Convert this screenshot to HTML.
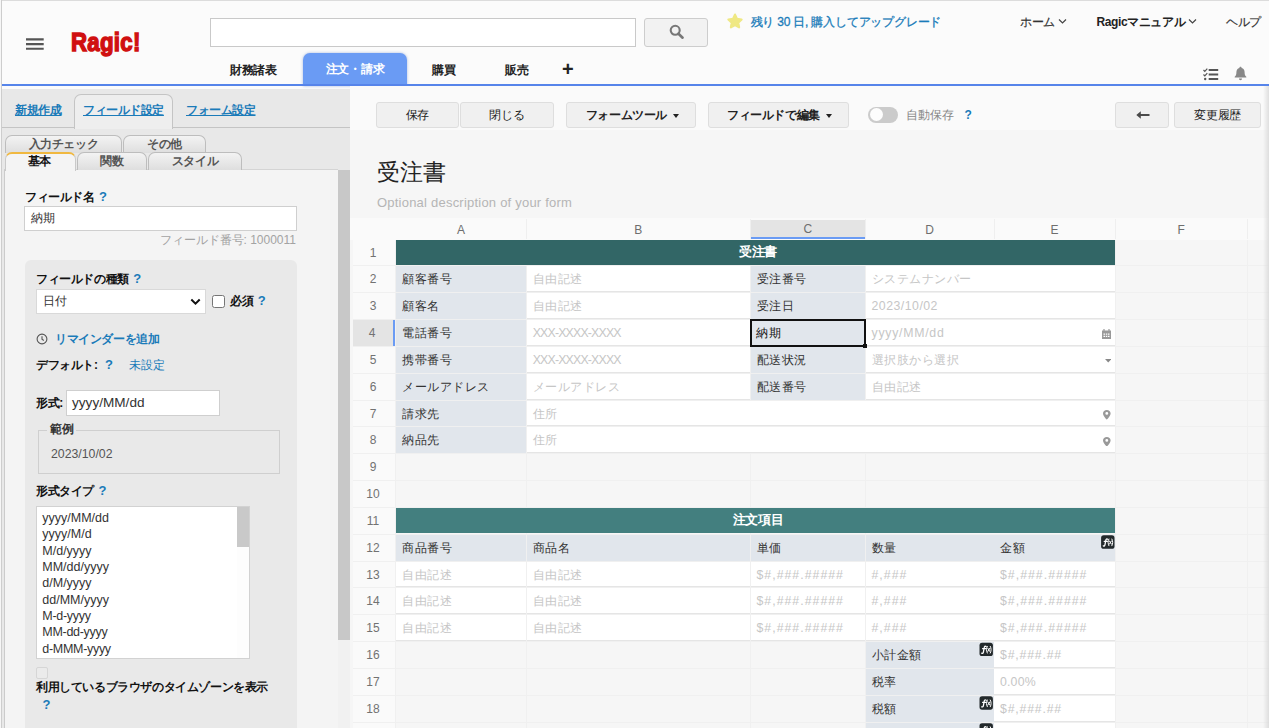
<!DOCTYPE html>
<html lang="ja">
<head>
<meta charset="utf-8">
<title>Ragic</title>
<style>
*{box-sizing:border-box;margin:0;padding:0}
html,body{width:1269px;height:728px;overflow:hidden;background:#f5f5f5;font-family:"Liberation Sans",sans-serif;font-size:13px;color:#222}
.a{position:absolute;white-space:nowrap}
.b{font-weight:bold}
.blue{color:#1a7bb9}
/* header */
#hdr{left:0;top:0;width:1269px;height:90px;background:#fbfbfb}
#hline{left:0;top:84px;width:1269px;height:2.300px;background:#5684ea}
#edgeL{left:0;top:0;width:2.400px;height:728px;background:linear-gradient(90deg,#f6f6f6 0,#f6f6f6 1.500px,#cdcdcd 1.500px,#cdcdcd 2.400px)}
#edgeT{left:0;top:0;width:1269px;height:1px;background:#dcdcdc}
.nav{font-size:12px;letter-spacing:-.3px;font-weight:bold;color:#222;top:62px;height:16px;line-height:16px}
#navact{left:303px;top:53px;width:104px;height:33px;background:#6a9bf4;border-radius:7px 7px 0 0;color:#fff;text-align:center;line-height:32px;font-size:12px;letter-spacing:-.3px;font-weight:bold;box-shadow:0 0 3px rgba(80,120,200,.5)}
#search{left:210px;top:18px;width:426px;height:29px;background:#fff;border:1px solid #c9c9c9}
#sbtn{left:644px;top:18px;width:64px;height:29px;background:#f2f2f2;border:1px solid #cdcdcd;border-radius:3px}
.top{font-size:12px;letter-spacing:-.4px;-webkit-text-stroke:.2px;top:14px;height:16px;line-height:16px;color:#333}
/* left panel */
#lp{left:0;top:88.500px;width:350px;height:640px;background:#e8e8e8}
#lpin{left:4px;top:169px;width:334px;height:559px;background:#f4f4f4;border-left:1px solid #cbcbcb;border-top:1px solid #d4d4d4}
#lsbt{left:338px;top:170px;width:12px;height:558px;background:#f1f1f1}
#lsbh{left:338.200px;top:170px;width:11.600px;height:470px;background:#c8c8c8}
#tabline{left:0;top:127px;width:350px;height:1px;background:#c4c4c4}
#tabact{left:74px;top:94px;width:99px;height:35px;background:#eeeeee;border:1px solid #c4c4c4;border-bottom:none;border-radius:7px 7px 0 0}
.lnk{font-size:12px;letter-spacing:-.45px;font-weight:bold;color:#1a7bb9;text-decoration:underline;top:102px;height:16px;line-height:16px}
.st{height:18px;border:1px solid #bdbdbd;border-bottom:none;border-radius:7px 7px 0 0;background:linear-gradient(#f3f3f3,#dedede);font-size:12px;letter-spacing:-.45px;font-weight:bold;color:#555;text-align:center;line-height:16px}
.lab{font-size:12px;letter-spacing:-.4px;font-weight:bold;color:#111;height:16px;line-height:16px}
.q{color:#1a7bb9;font-weight:bold;font-size:13px;margin-left:1.500px}
.inp{background:#fff;border:1px solid #cfcfcf;font-size:12px;color:#333;line-height:22px;padding-left:5px}
#gbox{left:25px;top:260.300px;width:271.800px;height:480px;background:#e9e9e9;border-radius:6px}
.li{left:5.300px;font-size:12.500px;color:#333;height:16px;line-height:16px}
</style>
</head>
<body>
<!-- ===== header ===== -->
<div id="hdr" class="a"></div>
<div id="edgeT" class="a"></div>
<svg class="a" style="left:26px;top:38px" width="18" height="13" viewBox="0 0 18 13"><path d="M0 1.400h17.700M0 6.100h17.700M0 10.800h17.700" stroke="#555" stroke-width="2.100" fill="none"/></svg>
<div class="a" id="logo" style="left:70.500px;top:24.300px;font-size:26.500px;line-height:36px;font-weight:bold;color:#d01010;-webkit-text-stroke:1.500px #d01010;transform-origin:0 50%;transform:scaleX(.84);letter-spacing:.3px">Ragic!</div>
<div id="search" class="a"></div>
<div id="sbtn" class="a"></div>
<svg class="a" style="left:668px;top:23px" width="17" height="17" viewBox="0 0 17 17"><circle cx="7.200" cy="7.300" r="4.500" stroke="#777" stroke-width="2.100" fill="none"/><path d="M10.500 10.700L14.600 14.700" stroke="#777" stroke-width="2.600" stroke-linecap="round"/></svg>
<div class="a nav" style="left:230px">財務諸表</div>
<div id="navact" class="a">注文・請求</div>
<div class="a nav" style="left:432px">購買</div>
<div class="a nav" style="left:505px">販売</div>
<div class="a" style="left:562px;top:58px;font-size:20px;line-height:22px;font-weight:bold;color:#222">+</div>
<svg class="a" style="left:726px;top:12px" width="18" height="18" viewBox="0 0 18 18"><path d="M9 2.600l2 4.300 4.600.6-3.400 3.200.9 4.600L9 13l-4.100 2.300.9-4.600-3.400-3.200 4.600-.6z" fill="#efe883" stroke="#efe883" stroke-width="2.200" stroke-linejoin="round"/></svg>
<div class="a top" style="left:750.500px;color:#1a7bb9;letter-spacing:-.2px;-webkit-text-stroke:.3px #1a7bb9">残り 30 日, 購入してアップグレード</div>
<div class="a top" style="left:1020px">ホーム</div>
<svg class="a" style="left:1058px;top:18px" width="9" height="7" viewBox="0 0 9 7"><path d="M1 1.5l3.5 3.5L8 1.5" stroke="#444" stroke-width="1.2" fill="none"/></svg>
<div class="a top b" style="left:1096.500px;color:#222;letter-spacing:-.4px;-webkit-text-stroke:0">Ragicマニュアル</div>
<svg class="a" style="left:1188px;top:18px" width="9" height="7" viewBox="0 0 9 7"><path d="M1 1.5l3.5 3.5L8 1.5" stroke="#444" stroke-width="1.2" fill="none"/></svg>
<div class="a top" style="left:1226px">ヘルプ</div>
<!-- checklist + bell -->
<svg class="a" style="left:1202.500px;top:67.700px" width="16" height="13" viewBox="0 0 16 13"><path d="M5.700 2h9.500M5.700 6.500h9.500M5.700 11h9.500" stroke="#555" stroke-width="1.800"/><path d="M.5 2l1.300 1.300L4.300.6M.5 6.500l1.300 1.300 2.500-2.700" stroke="#555" stroke-width="1.200" fill="none"/><circle cx="2.200" cy="11" r="1.200" fill="#555"/></svg>
<svg class="a" style="left:1234px;top:66px" width="13" height="15" viewBox="0 0 13 15"><path d="M6.5 0.8c.7 0 1.1.5 1.1 1.1 2 .5 3 2.2 3 4.3 0 2.600.7 3.700 1.700 4.600v.8H.7v-.8c1-.9 1.700-2 1.700-4.600 0-2.100 1-3.800 3-4.300 0-.6.400-1.100 1.100-1.100zM5 12.600h3c0 .9-.6 1.600-1.500 1.600S5 13.500 5 12.600z" fill="#888"/></svg>
<div id="hline" class="a"></div>

<!-- ===== left panel ===== -->
<div id="lp" class="a"></div>
<div id="tabline" class="a"></div>
<div id="tabact" class="a"></div>
<div class="a lnk" style="left:15px">新規作成</div>
<div class="a lnk" style="left:83px">フィールド設定</div>
<div class="a lnk" style="left:186px">フォーム設定</div>
<div id="lpin" class="a"></div>
<div id="lsbt" class="a"></div>
<div id="lsbh" class="a"></div>
<div class="a st" style="left:5px;top:135px;width:117px">入力チェック</div>
<div class="a st" style="left:123px;top:135px;width:83px">その他</div>
<div class="a st" style="left:77px;top:152px;width:70px">関数</div>
<div class="a st" style="left:148px;top:152px;width:94px">スタイル</div>
<div class="a st" style="left:5px;top:152px;width:71px;height:19px;background:#f4f4f4;color:#111;border-top:2px solid #f0b840;border-color:#f0b840 #c9c9c9 #c9c9c9 #c9c9c9;line-height:15px;padding-right:2px">基本</div>

<div class="a lab" style="left:25px;top:189px">フィールド名 <span class="q">?</span></div>
<div class="a inp" style="left:24px;top:206px;width:273px;height:25px;letter-spacing:.3px;padding-left:5.500px">納期</div>
<div class="a" style="left:100px;width:196px;top:232px;text-align:right;font-size:12px;color:#a3a3a3;line-height:16px">フィールド番号: 1000011</div>
<div id="gbox" class="a"></div>
<div class="a lab" style="left:36px;top:271px">フィールドの種類 <span class="q">?</span></div>
<div class="a inp" style="left:36px;top:289px;width:170px;height:25px;border-color:#d9d9d9;padding-left:6px">日付</div>
<svg class="a" style="left:190px;top:298px" width="11" height="8" viewBox="0 0 11 8"><path d="M1.300 1.500l4.200 4.200 4.200-4.200" stroke="#111" stroke-width="2" fill="none"/></svg>
<div class="a" style="left:212px;top:294.700px;width:13px;height:13px;background:#fff;border:1px solid #767676;border-radius:2.500px"></div>
<div class="a lab" style="left:230px;top:293px">必須 <span class="q">?</span></div>
<svg class="a" style="left:36px;top:333px" width="12" height="12" viewBox="0 0 12 12"><circle cx="6" cy="6" r="4.900" stroke="#555" stroke-width="1.100" fill="none"/><path d="M6 3.200V6.300l1.800 1.200" stroke="#555" stroke-width="1.100" fill="none"/></svg>
<div class="a lab" style="left:55px;top:331px;color:#1a7bb9">リマインダーを追加</div>
<div class="a lab" style="left:36px;top:357px">デフォルト: &nbsp;<span class="q">?</span></div>
<div class="a" style="left:129px;top:357px;font-size:12px;line-height:16px;color:#1a7bb9">未設定</div>
<div class="a lab" style="left:36px;top:395px">形式:</div>
<div class="a inp" style="left:66px;top:390px;width:154px;height:26px;font-size:13.600px;line-height:24px">yyyy/MM/dd</div>
<div class="a" style="left:38px;top:430px;width:242px;height:44px;border:1px solid #cfcfcf"></div>
<div class="a lab" style="left:47px;top:421px;background:#e9e9e9;padding:0 3px;font-weight:bold;color:#333">範例</div>
<div class="a" style="left:51px;top:446px;font-size:12.300px;line-height:16px;color:#555">2023/10/02</div>
<div class="a lab" style="left:36px;top:483px">形式タイプ <span class="q">?</span></div>
<div class="a" style="left:36px;top:506px;width:214px;height:153px;background:#fff;border:1px solid #d2d2d2">
 <div class="a li" style="top:3px">yyyy/MM/dd</div>
 <div class="a li" style="top:19px">yyyy/M/d</div>
 <div class="a li" style="top:36px">M/d/yyyy</div>
 <div class="a li" style="top:52px">MM/dd/yyyy</div>
 <div class="a li" style="top:68px">d/M/yyyy</div>
 <div class="a li" style="top:85px">dd/MM/yyyy</div>
 <div class="a li" style="top:101px;letter-spacing:-.3px">M-d-yyyy</div>
 <div class="a li" style="top:117px;letter-spacing:-.3px">MM-dd-yyyy</div>
 <div class="a li" style="top:134px;letter-spacing:-.3px">d-MMM-yyyy</div>
 <div class="a" style="left:200px;top:0;width:12px;height:151px;background:#fdfdfd"></div>
 <div class="a" style="left:200px;top:0;width:12px;height:40px;background:#c9c9c9"></div>
</div>
<div class="a" style="left:36px;top:667px;width:12px;height:12px;background:#ebebeb;border:1px solid #d6d6d6;border-radius:2px"></div>
<div class="a lab" style="left:36px;top:679px">利用しているブラウザのタイムゾーンを表示</div>
<div class="a lab q" style="left:41px;top:697px">?</div>

<!-- ===== right panel ===== -->
<style>
#rp{left:350px;top:86px;width:919px;height:642px;background:#f6f6f6}
#tb{left:350px;top:86px;width:919px;height:44.200px;background:#fafafa}
.btn{top:102px;height:26px;background:#f0f0f0;border:1px solid #dedede;border-radius:3px;font-size:12px;letter-spacing:-.4px;color:#222;text-align:center;line-height:24px}
.car{display:inline-block;width:0;height:0;border-left:3.500px solid transparent;border-right:3.500px solid transparent;border-top:4.200px solid #222;margin-left:6px;position:relative;top:-1.500px}
.ch{top:218px;height:21.500px;font-size:12px;color:#6e6e6e;text-align:center;line-height:24px;background:#fafafa}
.rn{left:352.500px;width:42.500px;font-size:12px;color:#727272;padding-right:1.500px;text-align:center;background:#fafafa}
.c{font-size:12px;letter-spacing:.5px;overflow:hidden}
.c span{font-size:12.300px}
.s1{letter-spacing:1.020px}.s2{letter-spacing:.49px}.s3{letter-spacing:-.8px}.s4{letter-spacing:.74px}
.l{background:#e1e6ec;color:#333;padding-left:6px}
.w{background:#fff;color:#c6c6c6;padding-left:6px;border-bottom:1px solid #e5e5e5}
.e{background:#f6f6f6}
.t{color:#fff;font-weight:bold;text-align:center;font-size:13px;letter-spacing:-.25px;padding-left:5px}

</style>
<div id="rp" class="a"></div><div id="tb" class="a"></div>
<div class="a" style="left:353px;top:239px;width:917px;height:489px;background:#f0f0f0"></div>
<div class="a btn" style="left:375.500px;width:83.500px">保存</div>
<div class="a btn" style="left:460px;width:93.500px">閉じる</div>
<div class="a btn b" style="left:566px;width:130px;padding-left:3px">フォームツール<span class="car"></span></div>
<div class="a btn b" style="left:708px;width:141px;padding-left:2px">フィールドで編集<span class="car"></span></div>
<div class="a" style="left:868.400px;top:106.700px;width:29.600px;height:16px;background:#cbcbcb;border-radius:8px"></div>
<div class="a" style="left:869.900px;top:108.100px;width:13.200px;height:13.200px;background:#fdfdfd;border-radius:7px"></div>
<div class="a" style="left:906px;top:107px;font-size:12px;letter-spacing:.15px;line-height:16px;color:#888">自動保存</div>
<div class="a q" style="left:963px;top:107px;font-size:12px;line-height:16px">?</div>
<div class="a btn" style="left:1115px;width:53.600px"></div>
<svg class="a" style="left:1135.500px;top:110.500px" width="14" height="8" viewBox="0 0 14 8"><path d="M4.800 0.300L0.300 4l4.500 3.700V5.100h8.700V2.900H4.800z" fill="#4a4a4a"/></svg>
<div class="a btn" style="left:1174.300px;width:86.500px">変更履歴</div>
<div class="a" style="left:377px;top:155.500px;font-size:23px;line-height:32px;color:#222">受注書</div>
<div class="a" style="left:377px;top:194.500px;font-size:13px;letter-spacing:.22px;line-height:16px;color:#b5b5b5">Optional description of your form</div>
<div class="a" style="left:350px;top:218px;width:919px;height:22px;background:#fafafa"></div>
<div class="a ch" style="left:396px;width:130.2px">A</div>
<div class="a ch" style="left:526.7px;width:223.3px">B</div>
<div class="a ch" style="left:750.5px;width:114.5px;top:220px;height:19.300px;background:#e4e4e4;border-bottom:2px solid #6a9bf4;line-height:18px">C</div>
<div class="a ch" style="left:865.5px;width:128.0px">D</div>
<div class="a ch" style="left:994px;width:121px">E</div>
<div class="a ch" style="left:1115.5px;width:131.5px">F</div>
<div class="a" style="left:526.2px;top:219px;width:1px;height:20px;background:#efefef"></div>
<div class="a" style="left:750px;top:219px;width:1px;height:20px;background:#efefef"></div>
<div class="a" style="left:865px;top:219px;width:1px;height:20px;background:#efefef"></div>
<div class="a" style="left:993.5px;top:219px;width:1px;height:20px;background:#efefef"></div>
<div class="a" style="left:1115px;top:219px;width:1px;height:20px;background:#efefef"></div>
<div class="a" style="left:1247px;top:219px;width:1px;height:20px;background:#efefef"></div>
<div class="a" style="left:1269px;top:219px;width:1px;height:20px;background:#efefef"></div>
<div class="a rn" style="top:239.60px;height:25.83px;line-height:26.83px">1</div>
<div class="a e" style="left:396px;top:239.60px;width:130.2px;height:25.83px"></div>
<div class="a e" style="left:526.7px;top:239.60px;width:223.3px;height:25.83px"></div>
<div class="a e" style="left:750.5px;top:239.60px;width:114.5px;height:25.83px"></div>
<div class="a e" style="left:865.5px;top:239.60px;width:128.0px;height:25.83px"></div>
<div class="a e" style="left:994px;top:239.60px;width:121px;height:25.83px"></div>
<div class="a e" style="left:1115.5px;top:239.60px;width:131.5px;height:25.83px"></div>
<div class="a e" style="left:1247.5px;top:239.60px;width:21.5px;height:25.83px"></div>
<div class="a rn" style="top:266.43px;height:25.83px;line-height:26.83px">2</div>
<div class="a e" style="left:396px;top:266.43px;width:130.2px;height:25.83px"></div>
<div class="a e" style="left:526.7px;top:266.43px;width:223.3px;height:25.83px"></div>
<div class="a e" style="left:750.5px;top:266.43px;width:114.5px;height:25.83px"></div>
<div class="a e" style="left:865.5px;top:266.43px;width:128.0px;height:25.83px"></div>
<div class="a e" style="left:994px;top:266.43px;width:121px;height:25.83px"></div>
<div class="a e" style="left:1115.5px;top:266.43px;width:131.5px;height:25.83px"></div>
<div class="a e" style="left:1247.5px;top:266.43px;width:21.5px;height:25.83px"></div>
<div class="a rn" style="top:293.26px;height:25.83px;line-height:26.83px">3</div>
<div class="a e" style="left:396px;top:293.26px;width:130.2px;height:25.83px"></div>
<div class="a e" style="left:526.7px;top:293.26px;width:223.3px;height:25.83px"></div>
<div class="a e" style="left:750.5px;top:293.26px;width:114.5px;height:25.83px"></div>
<div class="a e" style="left:865.5px;top:293.26px;width:128.0px;height:25.83px"></div>
<div class="a e" style="left:994px;top:293.26px;width:121px;height:25.83px"></div>
<div class="a e" style="left:1115.5px;top:293.26px;width:131.5px;height:25.83px"></div>
<div class="a e" style="left:1247.5px;top:293.26px;width:21.5px;height:25.83px"></div>
<div class="a rn" style="top:320.09px;height:25.83px;line-height:26.83px;background:#e4e4e4;border-right:2px solid #6a9bf4">4</div>
<div class="a e" style="left:396px;top:320.09px;width:130.2px;height:25.83px"></div>
<div class="a e" style="left:526.7px;top:320.09px;width:223.3px;height:25.83px"></div>
<div class="a e" style="left:750.5px;top:320.09px;width:114.5px;height:25.83px"></div>
<div class="a e" style="left:865.5px;top:320.09px;width:128.0px;height:25.83px"></div>
<div class="a e" style="left:994px;top:320.09px;width:121px;height:25.83px"></div>
<div class="a e" style="left:1115.5px;top:320.09px;width:131.5px;height:25.83px"></div>
<div class="a e" style="left:1247.5px;top:320.09px;width:21.5px;height:25.83px"></div>
<div class="a rn" style="top:346.92px;height:25.83px;line-height:26.83px">5</div>
<div class="a e" style="left:396px;top:346.92px;width:130.2px;height:25.83px"></div>
<div class="a e" style="left:526.7px;top:346.92px;width:223.3px;height:25.83px"></div>
<div class="a e" style="left:750.5px;top:346.92px;width:114.5px;height:25.83px"></div>
<div class="a e" style="left:865.5px;top:346.92px;width:128.0px;height:25.83px"></div>
<div class="a e" style="left:994px;top:346.92px;width:121px;height:25.83px"></div>
<div class="a e" style="left:1115.5px;top:346.92px;width:131.5px;height:25.83px"></div>
<div class="a e" style="left:1247.5px;top:346.92px;width:21.5px;height:25.83px"></div>
<div class="a rn" style="top:373.75px;height:25.83px;line-height:26.83px">6</div>
<div class="a e" style="left:396px;top:373.75px;width:130.2px;height:25.83px"></div>
<div class="a e" style="left:526.7px;top:373.75px;width:223.3px;height:25.83px"></div>
<div class="a e" style="left:750.5px;top:373.75px;width:114.5px;height:25.83px"></div>
<div class="a e" style="left:865.5px;top:373.75px;width:128.0px;height:25.83px"></div>
<div class="a e" style="left:994px;top:373.75px;width:121px;height:25.83px"></div>
<div class="a e" style="left:1115.5px;top:373.75px;width:131.5px;height:25.83px"></div>
<div class="a e" style="left:1247.5px;top:373.75px;width:21.5px;height:25.83px"></div>
<div class="a rn" style="top:400.58px;height:25.83px;line-height:26.83px">7</div>
<div class="a e" style="left:396px;top:400.58px;width:130.2px;height:25.83px"></div>
<div class="a e" style="left:526.7px;top:400.58px;width:223.3px;height:25.83px"></div>
<div class="a e" style="left:750.5px;top:400.58px;width:114.5px;height:25.83px"></div>
<div class="a e" style="left:865.5px;top:400.58px;width:128.0px;height:25.83px"></div>
<div class="a e" style="left:994px;top:400.58px;width:121px;height:25.83px"></div>
<div class="a e" style="left:1115.5px;top:400.58px;width:131.5px;height:25.83px"></div>
<div class="a e" style="left:1247.5px;top:400.58px;width:21.5px;height:25.83px"></div>
<div class="a rn" style="top:427.41px;height:25.83px;line-height:26.83px">8</div>
<div class="a e" style="left:396px;top:427.41px;width:130.2px;height:25.83px"></div>
<div class="a e" style="left:526.7px;top:427.41px;width:223.3px;height:25.83px"></div>
<div class="a e" style="left:750.5px;top:427.41px;width:114.5px;height:25.83px"></div>
<div class="a e" style="left:865.5px;top:427.41px;width:128.0px;height:25.83px"></div>
<div class="a e" style="left:994px;top:427.41px;width:121px;height:25.83px"></div>
<div class="a e" style="left:1115.5px;top:427.41px;width:131.5px;height:25.83px"></div>
<div class="a e" style="left:1247.5px;top:427.41px;width:21.5px;height:25.83px"></div>
<div class="a rn" style="top:454.24px;height:25.83px;line-height:26.83px">9</div>
<div class="a e" style="left:396px;top:454.24px;width:130.2px;height:25.83px"></div>
<div class="a e" style="left:526.7px;top:454.24px;width:223.3px;height:25.83px"></div>
<div class="a e" style="left:750.5px;top:454.24px;width:114.5px;height:25.83px"></div>
<div class="a e" style="left:865.5px;top:454.24px;width:128.0px;height:25.83px"></div>
<div class="a e" style="left:994px;top:454.24px;width:121px;height:25.83px"></div>
<div class="a e" style="left:1115.5px;top:454.24px;width:131.5px;height:25.83px"></div>
<div class="a e" style="left:1247.5px;top:454.24px;width:21.5px;height:25.83px"></div>
<div class="a rn" style="top:481.07px;height:25.83px;line-height:26.83px">10</div>
<div class="a e" style="left:396px;top:481.07px;width:130.2px;height:25.83px"></div>
<div class="a e" style="left:526.7px;top:481.07px;width:223.3px;height:25.83px"></div>
<div class="a e" style="left:750.5px;top:481.07px;width:114.5px;height:25.83px"></div>
<div class="a e" style="left:865.5px;top:481.07px;width:128.0px;height:25.83px"></div>
<div class="a e" style="left:994px;top:481.07px;width:121px;height:25.83px"></div>
<div class="a e" style="left:1115.5px;top:481.07px;width:131.5px;height:25.83px"></div>
<div class="a e" style="left:1247.5px;top:481.07px;width:21.5px;height:25.83px"></div>
<div class="a rn" style="top:507.90px;height:25.83px;line-height:26.83px">11</div>
<div class="a e" style="left:396px;top:507.90px;width:130.2px;height:25.83px"></div>
<div class="a e" style="left:526.7px;top:507.90px;width:223.3px;height:25.83px"></div>
<div class="a e" style="left:750.5px;top:507.90px;width:114.5px;height:25.83px"></div>
<div class="a e" style="left:865.5px;top:507.90px;width:128.0px;height:25.83px"></div>
<div class="a e" style="left:994px;top:507.90px;width:121px;height:25.83px"></div>
<div class="a e" style="left:1115.5px;top:507.90px;width:131.5px;height:25.83px"></div>
<div class="a e" style="left:1247.5px;top:507.90px;width:21.5px;height:25.83px"></div>
<div class="a rn" style="top:534.73px;height:25.83px;line-height:26.83px">12</div>
<div class="a e" style="left:396px;top:534.73px;width:130.2px;height:25.83px"></div>
<div class="a e" style="left:526.7px;top:534.73px;width:223.3px;height:25.83px"></div>
<div class="a e" style="left:750.5px;top:534.73px;width:114.5px;height:25.83px"></div>
<div class="a e" style="left:865.5px;top:534.73px;width:128.0px;height:25.83px"></div>
<div class="a e" style="left:994px;top:534.73px;width:121px;height:25.83px"></div>
<div class="a e" style="left:1115.5px;top:534.73px;width:131.5px;height:25.83px"></div>
<div class="a e" style="left:1247.5px;top:534.73px;width:21.5px;height:25.83px"></div>
<div class="a rn" style="top:561.56px;height:25.83px;line-height:26.83px">13</div>
<div class="a e" style="left:396px;top:561.56px;width:130.2px;height:25.83px"></div>
<div class="a e" style="left:526.7px;top:561.56px;width:223.3px;height:25.83px"></div>
<div class="a e" style="left:750.5px;top:561.56px;width:114.5px;height:25.83px"></div>
<div class="a e" style="left:865.5px;top:561.56px;width:128.0px;height:25.83px"></div>
<div class="a e" style="left:994px;top:561.56px;width:121px;height:25.83px"></div>
<div class="a e" style="left:1115.5px;top:561.56px;width:131.5px;height:25.83px"></div>
<div class="a e" style="left:1247.5px;top:561.56px;width:21.5px;height:25.83px"></div>
<div class="a rn" style="top:588.39px;height:25.83px;line-height:26.83px">14</div>
<div class="a e" style="left:396px;top:588.39px;width:130.2px;height:25.83px"></div>
<div class="a e" style="left:526.7px;top:588.39px;width:223.3px;height:25.83px"></div>
<div class="a e" style="left:750.5px;top:588.39px;width:114.5px;height:25.83px"></div>
<div class="a e" style="left:865.5px;top:588.39px;width:128.0px;height:25.83px"></div>
<div class="a e" style="left:994px;top:588.39px;width:121px;height:25.83px"></div>
<div class="a e" style="left:1115.5px;top:588.39px;width:131.5px;height:25.83px"></div>
<div class="a e" style="left:1247.5px;top:588.39px;width:21.5px;height:25.83px"></div>
<div class="a rn" style="top:615.22px;height:25.83px;line-height:26.83px">15</div>
<div class="a e" style="left:396px;top:615.22px;width:130.2px;height:25.83px"></div>
<div class="a e" style="left:526.7px;top:615.22px;width:223.3px;height:25.83px"></div>
<div class="a e" style="left:750.5px;top:615.22px;width:114.5px;height:25.83px"></div>
<div class="a e" style="left:865.5px;top:615.22px;width:128.0px;height:25.83px"></div>
<div class="a e" style="left:994px;top:615.22px;width:121px;height:25.83px"></div>
<div class="a e" style="left:1115.5px;top:615.22px;width:131.5px;height:25.83px"></div>
<div class="a e" style="left:1247.5px;top:615.22px;width:21.5px;height:25.83px"></div>
<div class="a rn" style="top:642.05px;height:25.83px;line-height:26.83px">16</div>
<div class="a e" style="left:396px;top:642.05px;width:130.2px;height:25.83px"></div>
<div class="a e" style="left:526.7px;top:642.05px;width:223.3px;height:25.83px"></div>
<div class="a e" style="left:750.5px;top:642.05px;width:114.5px;height:25.83px"></div>
<div class="a e" style="left:865.5px;top:642.05px;width:128.0px;height:25.83px"></div>
<div class="a e" style="left:994px;top:642.05px;width:121px;height:25.83px"></div>
<div class="a e" style="left:1115.5px;top:642.05px;width:131.5px;height:25.83px"></div>
<div class="a e" style="left:1247.5px;top:642.05px;width:21.5px;height:25.83px"></div>
<div class="a rn" style="top:668.88px;height:25.83px;line-height:26.83px">17</div>
<div class="a e" style="left:396px;top:668.88px;width:130.2px;height:25.83px"></div>
<div class="a e" style="left:526.7px;top:668.88px;width:223.3px;height:25.83px"></div>
<div class="a e" style="left:750.5px;top:668.88px;width:114.5px;height:25.83px"></div>
<div class="a e" style="left:865.5px;top:668.88px;width:128.0px;height:25.83px"></div>
<div class="a e" style="left:994px;top:668.88px;width:121px;height:25.83px"></div>
<div class="a e" style="left:1115.5px;top:668.88px;width:131.5px;height:25.83px"></div>
<div class="a e" style="left:1247.5px;top:668.88px;width:21.5px;height:25.83px"></div>
<div class="a rn" style="top:695.71px;height:25.83px;line-height:26.83px">18</div>
<div class="a e" style="left:396px;top:695.71px;width:130.2px;height:25.83px"></div>
<div class="a e" style="left:526.7px;top:695.71px;width:223.3px;height:25.83px"></div>
<div class="a e" style="left:750.5px;top:695.71px;width:114.5px;height:25.83px"></div>
<div class="a e" style="left:865.5px;top:695.71px;width:128.0px;height:25.83px"></div>
<div class="a e" style="left:994px;top:695.71px;width:121px;height:25.83px"></div>
<div class="a e" style="left:1115.5px;top:695.71px;width:131.5px;height:25.83px"></div>
<div class="a e" style="left:1247.5px;top:695.71px;width:21.5px;height:25.83px"></div>
<div class="a rn" style="top:722.54px;height:25.83px;line-height:26.83px">19</div>
<div class="a e" style="left:396px;top:722.54px;width:130.2px;height:25.83px"></div>
<div class="a e" style="left:526.7px;top:722.54px;width:223.3px;height:25.83px"></div>
<div class="a e" style="left:750.5px;top:722.54px;width:114.5px;height:25.83px"></div>
<div class="a e" style="left:865.5px;top:722.54px;width:128.0px;height:25.83px"></div>
<div class="a e" style="left:994px;top:722.54px;width:121px;height:25.83px"></div>
<div class="a e" style="left:1115.5px;top:722.54px;width:131.5px;height:25.83px"></div>
<div class="a e" style="left:1247.5px;top:722.54px;width:21.5px;height:25.83px"></div>
<div class="a c t" style="left:396px;top:239.60px;width:719px;height:25.83px;line-height:26.53px;background:#326666;height:25.200px;line-height:24.200px">受注書</div>
<div class="a c l" style="left:396px;top:266.43px;width:130.2px;height:25.83px;line-height:26.53px">顧客番号</div>
<div class="a c w" style="left:526.7px;top:266.43px;width:223.3px;height:25.83px;line-height:26.53px">自由記述</div>
<div class="a c l" style="left:750.5px;top:266.43px;width:114.5px;height:25.83px;line-height:26.53px">受注番号</div>
<div class="a c w" style="left:865.5px;top:266.43px;width:249.5px;height:25.83px;line-height:26.53px">システムナンバー</div>
<div class="a c l" style="left:396px;top:293.26px;width:130.2px;height:25.83px;line-height:26.53px">顧客名</div>
<div class="a c w" style="left:526.7px;top:293.26px;width:223.3px;height:25.83px;line-height:26.53px">自由記述</div>
<div class="a c l" style="left:750.5px;top:293.26px;width:114.5px;height:25.83px;line-height:26.53px">受注日</div>
<div class="a c w" style="left:865.5px;top:293.26px;width:249.5px;height:25.83px;line-height:26.53px"><span class=s2>2023/10/02</span></div>
<div class="a c l" style="left:396px;top:320.09px;width:130.2px;height:25.83px;line-height:26.53px">電話番号</div>
<div class="a c w" style="left:526.7px;top:320.09px;width:223.3px;height:25.83px;line-height:26.53px"><span class=s3>XXX-XXXX-XXXX</span></div>
<div class="a c l" style="left:750.5px;top:320.09px;width:114.5px;height:25.83px;line-height:26.53px"><span style="position:relative;left:-.5px;color:#111">納期</span></div>
<div class="a c w" style="left:865.5px;top:320.09px;width:249.5px;height:25.83px;line-height:26.53px"><span class=s4>yyyy/MM/dd</span></div>
<div class="a c l" style="left:396px;top:346.92px;width:130.2px;height:25.83px;line-height:26.53px">携帯番号</div>
<div class="a c w" style="left:526.7px;top:346.92px;width:223.3px;height:25.83px;line-height:26.53px"><span class=s3>XXX-XXXX-XXXX</span></div>
<div class="a c l" style="left:750.5px;top:346.92px;width:114.5px;height:25.83px;line-height:26.53px">配送状況</div>
<div class="a c w" style="left:865.5px;top:346.92px;width:249.5px;height:25.83px;line-height:26.53px">選択肢から選択</div>
<div class="a c l" style="left:396px;top:373.75px;width:130.2px;height:25.83px;line-height:26.53px">メールアドレス</div>
<div class="a c w" style="left:526.7px;top:373.75px;width:223.3px;height:25.83px;line-height:26.53px">メールアドレス</div>
<div class="a c l" style="left:750.5px;top:373.75px;width:114.5px;height:25.83px;line-height:26.53px">配送番号</div>
<div class="a c w" style="left:865.5px;top:373.75px;width:249.5px;height:25.83px;line-height:26.53px">自由記述</div>
<div class="a c l" style="left:396px;top:400.58px;width:130.2px;height:25.83px;line-height:26.53px">請求先</div>
<div class="a c w" style="left:526.7px;top:400.58px;width:588.3px;height:25.83px;line-height:26.53px">住所</div>
<div class="a c l" style="left:396px;top:427.41px;width:130.2px;height:25.83px;line-height:26.53px">納品先</div>
<div class="a c w" style="left:526.7px;top:427.41px;width:588.3px;height:25.83px;line-height:26.53px">住所</div>
<div class="a c t" style="left:396px;top:507.90px;width:719px;height:25.83px;line-height:26.53px;background:#437f7f;height:25.200px;line-height:24.200px">注文項目</div>
<div class="a c l" style="left:396px;top:534.73px;width:130.2px;height:25.83px;line-height:26.53px">商品番号</div>
<div class="a c l" style="left:526.7px;top:534.73px;width:223.3px;height:25.83px;line-height:26.53px">商品名</div>
<div class="a c l" style="left:750.5px;top:534.73px;width:114.5px;height:25.83px;line-height:26.53px">単価</div>
<div class="a c l" style="left:865.5px;top:534.73px;width:128.0px;height:25.83px;line-height:26.53px">数量</div>
<div class="a c l" style="left:994px;top:534.73px;width:121px;height:25.83px;line-height:26.53px">金額</div>
<div class="a c w" style="left:396px;top:561.56px;width:130.2px;height:25.83px;line-height:26.53px">自由記述</div>
<div class="a c w" style="left:526.7px;top:561.56px;width:223.3px;height:25.83px;line-height:26.53px">自由記述</div>
<div class="a c w" style="left:750.5px;top:561.56px;width:114.5px;height:25.83px;line-height:26.53px"><span class=s1>$#,###.#####</span></div>
<div class="a c w" style="left:865.5px;top:561.56px;width:128.0px;height:25.83px;line-height:26.53px"><span class=s1>#,###</span></div>
<div class="a c w" style="left:994px;top:561.56px;width:121px;height:25.83px;line-height:26.53px"><span class=s1>$#,###.#####</span></div>
<div class="a c w" style="left:396px;top:588.39px;width:130.2px;height:25.83px;line-height:26.53px">自由記述</div>
<div class="a c w" style="left:526.7px;top:588.39px;width:223.3px;height:25.83px;line-height:26.53px">自由記述</div>
<div class="a c w" style="left:750.5px;top:588.39px;width:114.5px;height:25.83px;line-height:26.53px"><span class=s1>$#,###.#####</span></div>
<div class="a c w" style="left:865.5px;top:588.39px;width:128.0px;height:25.83px;line-height:26.53px"><span class=s1>#,###</span></div>
<div class="a c w" style="left:994px;top:588.39px;width:121px;height:25.83px;line-height:26.53px"><span class=s1>$#,###.#####</span></div>
<div class="a c w" style="left:396px;top:615.22px;width:130.2px;height:25.83px;line-height:26.53px">自由記述</div>
<div class="a c w" style="left:526.7px;top:615.22px;width:223.3px;height:25.83px;line-height:26.53px">自由記述</div>
<div class="a c w" style="left:750.5px;top:615.22px;width:114.5px;height:25.83px;line-height:26.53px"><span class=s1>$#,###.#####</span></div>
<div class="a c w" style="left:865.5px;top:615.22px;width:128.0px;height:25.83px;line-height:26.53px"><span class=s1>#,###</span></div>
<div class="a c w" style="left:994px;top:615.22px;width:121px;height:25.83px;line-height:26.53px"><span class=s1>$#,###.#####</span></div>
<div class="a c l" style="left:865.5px;top:642.05px;width:128.0px;height:25.83px;line-height:26.53px">小計金額</div>
<div class="a c w" style="left:994px;top:642.05px;width:121px;height:25.83px;line-height:26.53px"><span class=s1 style="letter-spacing:.81px">$#,###.##</span></div>
<div class="a c l" style="left:865.5px;top:668.88px;width:128.0px;height:25.83px;line-height:26.53px">税率</div>
<div class="a c w" style="left:994px;top:668.88px;width:121px;height:25.83px;line-height:26.53px"><span style="letter-spacing:.18px">0.00%</span></div>
<div class="a c l" style="left:865.5px;top:695.71px;width:128.0px;height:25.83px;line-height:26.53px">税額</div>
<div class="a c w" style="left:994px;top:695.71px;width:121px;height:25.83px;line-height:26.53px"><span class=s1 style="letter-spacing:.81px">$#,###.##</span></div>
<div class="a c l" style="left:865.5px;top:722.54px;width:128.0px;height:25.83px;line-height:26.53px"></div>
<div class="a c w" style="left:994px;top:722.54px;width:121px;height:25.83px;line-height:26.53px"></div>
<div class="a" style="left:750px;top:319.39px;width:116px;height:27.600px;border:2px solid #111"></div>
<div class="a" style="left:863.200px;top:343.89px;width:4px;height:4px;background:#111"></div>
<svg class="a" style="left:1100px;top:534px" width="17" height="17" viewBox="0 0 17 17"><g transform="translate(1.10 1.33)"><rect width="13.400" height="13.400" rx="2.600" fill="#23292b"/><path d="M6.700 3.900C5.600 3.300 4.900 3.700 4.700 5L3.900 9.400C3.700 10.500 3.100 10.900 2.200 10.500M3.100 6h3.200" stroke="#fff" stroke-width="1.300" fill="none" stroke-linecap="round"/><path d="M7.800 3.700C6.700 5.700 6.700 8.400 7.800 10.400M10.800 3.700C11.900 5.700 11.900 8.400 10.800 10.400M8.300 5.600L10.300 8.800M10.300 5.600L8.300 8.800" stroke="#fff" stroke-width="1" fill="none" stroke-linecap="round"/></g></svg>
<svg class="a" style="left:978px;top:641px" width="17" height="17" viewBox="0 0 17 17"><g transform="translate(1.50 1.65)"><rect width="13.400" height="13.400" rx="2.600" fill="#23292b"/><path d="M6.700 3.900C5.600 3.300 4.900 3.700 4.700 5L3.900 9.400C3.700 10.500 3.100 10.900 2.200 10.500M3.100 6h3.200" stroke="#fff" stroke-width="1.300" fill="none" stroke-linecap="round"/><path d="M7.800 3.700C6.700 5.700 6.700 8.400 7.800 10.400M10.800 3.700C11.900 5.700 11.900 8.400 10.800 10.400M8.300 5.600L10.300 8.800M10.300 5.600L8.300 8.800" stroke="#fff" stroke-width="1" fill="none" stroke-linecap="round"/></g></svg>
<svg class="a" style="left:978px;top:695px" width="17" height="17" viewBox="0 0 17 17"><g transform="translate(1.50 1.31)"><rect width="13.400" height="13.400" rx="2.600" fill="#23292b"/><path d="M6.700 3.900C5.600 3.300 4.900 3.700 4.700 5L3.900 9.400C3.700 10.500 3.100 10.900 2.200 10.500M3.100 6h3.200" stroke="#fff" stroke-width="1.300" fill="none" stroke-linecap="round"/><path d="M7.800 3.700C6.700 5.700 6.700 8.400 7.800 10.400M10.800 3.700C11.900 5.700 11.900 8.400 10.800 10.400M8.300 5.600L10.300 8.800M10.300 5.600L8.300 8.800" stroke="#fff" stroke-width="1" fill="none" stroke-linecap="round"/></g></svg>
<svg class="a" style="left:978px;top:722px" width="17" height="17" viewBox="0 0 17 17"><g transform="translate(1.50 1.14)"><rect width="13.400" height="13.400" rx="2.600" fill="#23292b"/><path d="M6.700 3.900C5.600 3.300 4.900 3.700 4.700 5L3.900 9.400C3.700 10.500 3.100 10.900 2.200 10.500M3.100 6h3.200" stroke="#fff" stroke-width="1.300" fill="none" stroke-linecap="round"/><path d="M7.800 3.700C6.700 5.700 6.700 8.400 7.800 10.400M10.800 3.700C11.900 5.700 11.900 8.400 10.800 10.400M8.300 5.600L10.300 8.800M10.300 5.600L8.300 8.800" stroke="#fff" stroke-width="1" fill="none" stroke-linecap="round"/></g></svg>
<svg class="a" style="left:1102px;top:329.09px" width="9" height="10" viewBox="0 0 9 10"><path d="M0 2h9v8H0zM2 0v2M7 0v2" fill="#999" stroke="#999" stroke-width="1.200"/><path d="M1.500 4.500h1.500v1.200h-1.500zM3.800 4.500h1.500v1.200h-1.500zM6 4.500h1.500v1.200h-1.500zM1.500 6.800h1.500v1.200h-1.500zM3.800 6.800h1.500v1.200h-1.500zM6 6.800h1.500v1.200h-1.500z" fill="#fff"/></svg>
<svg class="a" style="left:1104.800px;top:359.42px" width="6.400" height="3.600" viewBox="0 0 7 4"><path d="M0 0h7L3.500 4z" fill="#888"/></svg>
<svg class="a" style="left:1103.400px;top:409.98px" width="7.600" height="9.600" viewBox="0 0 8 11" preserveAspectRatio="none"><path d="M4 0C1.800 0 0 1.700 0 3.900 0 6.800 4 11 4 11s4-4.200 4-7.100C8 1.700 6.200 0 4 0zm0 5.400a1.500 1.500 0 110-3 1.500 1.500 0 010 3z" fill="#999"/></svg>
<svg class="a" style="left:1103.400px;top:436.81px" width="7.600" height="9.600" viewBox="0 0 8 11" preserveAspectRatio="none"><path d="M4 0C1.800 0 0 1.700 0 3.900 0 6.800 4 11 4 11s4-4.200 4-7.100C8 1.700 6.200 0 4 0zm0 5.400a1.500 1.500 0 110-3 1.500 1.500 0 010 3z" fill="#999"/></svg>
<div class="a" style="left:1263px;top:86px;width:6px;height:642px;background:linear-gradient(90deg,rgba(225,225,225,0),rgba(218,218,218,.85))"></div>
<div id="edgeL" class="a"></div>
</body>
</html>
